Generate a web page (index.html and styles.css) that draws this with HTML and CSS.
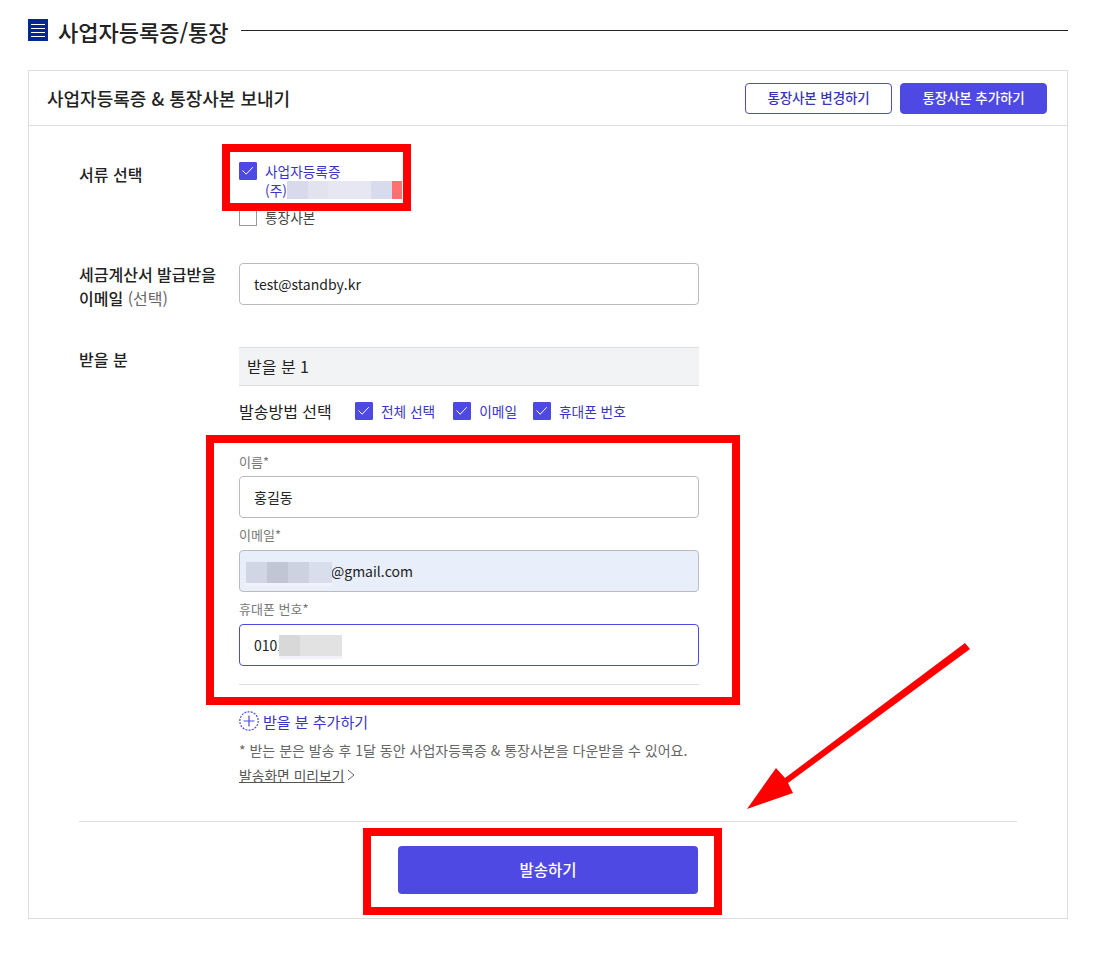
FILE: index.html
```html
<!DOCTYPE html>
<html lang="ko">
<head>
<meta charset="utf-8">
<title>사업자등록증/통장</title>
<link rel="stylesheet" href="styles.css">
</head>
<body>
<main class="page">
  <header class="section-title">
    <span class="title-icon"><i></i><i></i><i></i><i></i></span>
    <h1>사업자등록증/통장</h1>
    <span class="title-line"></span>
  </header>

  <section class="card">
    <div class="card-head">
      <h2>사업자등록증 &amp; 통장사본 보내기</h2>
      <div class="head-actions">
        <button class="btn btn-outline">통장사본 변경하기</button>
        <button class="btn btn-fill">통장사본 추가하기</button>
      </div>
    </div>

    <div class="card-body">
      <div class="row row-docs">
        <div class="row-label">서류 선택</div>
        <div class="row-content">
          <label class="check check-top">
            <span class="box on"><svg viewBox="0 0 16 16"><path d="M2.5 7.5l3.7 3.7 6.6-7"/></svg></span>
            <span class="check-text on-text">사업자등록증<br>(주)</span>
          </label>
          <label class="check check-plain">
            <span class="box"></span>
            <span class="check-text">통장사본</span>
          </label>
        </div>
      </div>

      <div class="row row-tax">
        <div class="row-label">세금계산서 발급받을<br>이메일 <span class="optional">(선택)</span></div>
        <div class="row-content">
          <input class="field" type="text" value="test@standby.kr">
        </div>
      </div>

      <div class="row row-recipient">
        <div class="row-label label-recipient">받을 분</div>
        <div class="row-content">
          <div class="band">받을 분 1</div>
          <div class="method">
            <span class="method-title">발송방법 선택</span>
            <label class="check"><span class="box on"><svg viewBox="0 0 16 16"><path d="M2.5 7.5l3.7 3.7 6.6-7"/></svg></span><span class="check-text on-text">전체 선택</span></label>
            <label class="check"><span class="box on"><svg viewBox="0 0 16 16"><path d="M2.5 7.5l3.7 3.7 6.6-7"/></svg></span><span class="check-text on-text">이메일</span></label>
            <label class="check"><span class="box on"><svg viewBox="0 0 16 16"><path d="M2.5 7.5l3.7 3.7 6.6-7"/></svg></span><span class="check-text on-text">휴대폰 번호</span></label>
          </div>

          <div class="group">
            <div class="field-label">이름*</div>
            <input class="field" type="text" value="홍길동">
          </div>
          <div class="group">
            <div class="field-label">이메일*</div>
            <input class="field field-auto" type="text" value="@gmail.com">
          </div>
          <div class="group">
            <div class="field-label">휴대폰 번호*</div>
            <input class="field field-focus" type="text" value="0101">
          </div>
          <hr class="inner-rule">

          <div class="add-row">
            <svg class="add-icon" viewBox="0 0 20 20"><circle cx="10" cy="10" r="9.2" stroke-dasharray="2 1.2"/><path d="M10 4.5v11M4.5 10h11"/></svg>
            <span>받을 분 추가하기</span>
          </div>
          <p class="note">* 받는 분은 발송 후 1달 동안 사업자등록증 &amp; 통장사본을 다운받을 수 있어요.</p>
          <div class="preview"><a>발송화면 미리보기</a><svg viewBox="0 0 8 12"><path d="M1 1l6 5-6 5"/></svg></div>
        </div>
      </div>

      <div class="submit-area">
        <button class="btn-send">발송하기</button>
      </div>
    </div>
  </section>

  <div class="blur blur-company"><i></i><i></i><i></i><i></i><i></i></div>
  <div class="blur blur-email"><i></i><i></i><i></i><i></i></div>
  <div class="blur blur-phone"><i></i><i></i></div>

  <div class="mark mark-docs"></div>
  <div class="mark mark-fields"></div>
  <div class="mark mark-send"></div>
  <svg class="arrow" viewBox="0 0 1105 955"><polygon points="965,643 970,649 788,783 793,793 747,809 776,768 785,778"/></svg>
</main>
</body>
</html>
```
FILE: styles.css
```css
* { box-sizing: border-box; }
html, body { margin: 0; padding: 0; background: #fff; }
body {
  font-family: "Noto Sans CJK KR", "Noto Sans", sans-serif;
  color: #222;
}
.page {
  position: relative;
  width: 1105px;
  height: 955px;
  padding: 15px 37px 0 28px;
  overflow: hidden;
}
.section-title {
  display: flex;
  align-items: center;
  height: 30px;
}
.title-icon {
  width: 20px;
  height: 22px;
  background: #00288f;
  display: flex;
  flex-direction: column;
  justify-content: center;
  gap: 3px;
  padding: 0 3px;
  flex: none;
}
.title-icon i { display: block; height: 1px; background: #fff; }
h1 {
  margin: 2px 13px 0 10px;
  font-size: 22px;
  font-weight: 500;
  line-height: 32px;
  white-space: nowrap;
}
.title-line { flex: 1; height: 1px; background: #222; margin-left: -1px; }

.card {
  margin-top: 25px;
  height: 849px;
  border: 1px solid #ddd;
}
.card-head {
  height: 55px;
  border-bottom: 1px solid #ddd;
  padding: 0 20px 0 18px;
  display: flex;
  align-items: center;
  justify-content: space-between;
}
h2 { margin: 0; font-size: 18px; font-weight: 500; line-height: 26px; }
.head-actions { display: flex; gap: 8px; }
.btn {
  width: 147px;
  height: 31px;
  border-radius: 4px;
  font: 500 13.5px/1 "Noto Sans CJK KR", sans-serif;
  letter-spacing: -0.1px;
  padding: 0;
}
.btn-outline { background: #fff; border: 1px solid #4f49e3; color: #3a34b8; }
.btn-fill { background: #4f49e3; border: 1px solid #4f49e3; color: #fff; }

.card-body { padding: 0 50px; }
.row { display: grid; grid-template-columns: 160px 460px; }
.row-label { font-size: 16px; font-weight: 500; line-height: 24px; }
.optional { font-weight: 400; color: #666; font-size: 16px; }
.row-docs { padding-top: 36px; height: 137px; }
.check { display: inline-flex; align-items: center; gap: 8px; }
.check-top { display: flex; align-items: flex-start; }
.check-plain { display: flex; margin-top: 8px; }
.box {
  width: 18px;
  height: 18px;
  flex: none;
  border: 1px solid #999;
  background: #fff;
  display: block;
}
.box.on { background: #4f49e3; border-color: #4f49e3; border-radius: 1px; }
.box svg { display: block; width: 16px; height: 16px; fill: none; stroke: #fff; stroke-width: 1; }
.check-text { font-size: 13.7px; line-height: 18px; color: #444; }
.on-text { color: #3a34c4; }
.check-top .check-text { line-height: 19px; }

.field {
  display: block;
  width: 460px;
  height: 42px;
  border: 1px solid #bbb;
  border-radius: 4px;
  padding: 0 14px;
  background: #fff;
  color: #222;
  font: 400 14px/40px "Noto Sans CJK KR", sans-serif;
  outline: none;
}
.field-auto { background: #e8effb; padding-left: 91px; }
.field-focus { border-color: #4f49e3; }

.row-tax { height: 84px; }
.row-tax .row-label { margin-top: -1px; }
.band {
  height: 39px;
  background: #f2f3f5;
  border-top: 1px solid #ddd;
  border-bottom: 1px solid #ddd;
  padding-left: 8px;
  font-size: 16px;
  line-height: 37px;
}
.method {
  display: flex;
  align-items: center;
  height: 18px;
  margin-top: 16px;
  gap: 18px;
}
.method .check:last-child { margin-left: -2px; }
.method-title { font-size: 16px; font-weight: 400; white-space: nowrap; width: 98px; }
.method + .group { margin-top: 33px; }
.field-label { font-size: 13px; line-height: 18px; color: #777; height: 18px; margin-top: 8px; margin-bottom: 6px; }
.method + .group .field-label { margin-top: 0; margin-bottom: 5px; }
.inner-rule { margin: 18px 0 0; border: 0; border-top: 1px solid #ddd; }
.add-row { display: flex; align-items: center; gap: 4px; margin-top: 26px; height: 20px; color: #3a34c4; font-size: 15px; }
.add-icon { width: 20px; height: 20px; fill: none; stroke: #4f49e3; stroke-width: 1.2; flex: none; }
.note { margin: 9px 0 0; font-size: 14px; line-height: 20px; color: #666; white-space: nowrap; }
.preview { display: flex; align-items: center; gap: 3px; margin-top: 5px; height: 20px; font-size: 13.8px; color: #555; }
.preview a { text-decoration: underline; }
.preview svg { width: 8px; height: 12px; fill: none; stroke: #666; stroke-width: 1; }

.submit-area {
  margin-top: 36px;
  border-top: 1px solid #ddd;
  padding-top: 24px;
  display: flex;
  justify-content: center;
}
.btn-send {
  width: 300px;
  height: 48px;
  background: #4f49e3;
  color: #fff;
  border: 0;
  border-radius: 4px;
  font: 500 15.5px/1 "Noto Sans CJK KR", sans-serif;
}

.blur { position: absolute; display: flex; }
.blur i { display: block; height: 100%; }
.blur-company { left: 287px; top: 181px; width: 115px; height: 18px; }
.blur-company i:nth-child(1) { width: 21px; background: #d9d9ec; }
.blur-company i:nth-child(2) { width: 20px; background: #e3e3f0; }
.blur-company i:nth-child(3) { width: 43px; background: #e7e7f3; }
.blur-company i:nth-child(4) { width: 21px; background: #d8dbee; }
.blur-company i:nth-child(5) { width: 10px; background: #ff7070; }
.blur-email { left: 246px; top: 562px; width: 86px; height: 21px; box-shadow: 0 3px 0 #f0f3fb; }
.blur-email i:nth-child(1) { width: 21px; background: #d0d6e4; }
.blur-email i:nth-child(2) { width: 21px; background: #c0c6d4; }
.blur-email i:nth-child(3) { width: 21px; background: #ccd2e0; }
.blur-email i:nth-child(4) { width: 23px; background: #d8deec; }
.blur-phone { left: 279px; top: 635px; width: 63px; height: 21px; box-shadow: 0 3px 0 #f2f2fa; }
.blur-phone i:nth-child(1) { width: 21px; background: #d8d8d8; }
.blur-phone i:nth-child(2) { width: 42px; background: #e2e2e2; }

.mark { position: absolute; border: 8px solid #f00; }
.mark-docs { left: 222px; top: 144px; width: 189px; height: 67px; }
.mark-fields { left: 206px; top: 435px; width: 534px; height: 270px; }
.mark-send { left: 363px; top: 828px; width: 359px; height: 87px; }
.arrow { position: absolute; left: 0; top: 0; width: 1105px; height: 955px; pointer-events: none; }
.arrow polygon { fill: #f00; }
```
